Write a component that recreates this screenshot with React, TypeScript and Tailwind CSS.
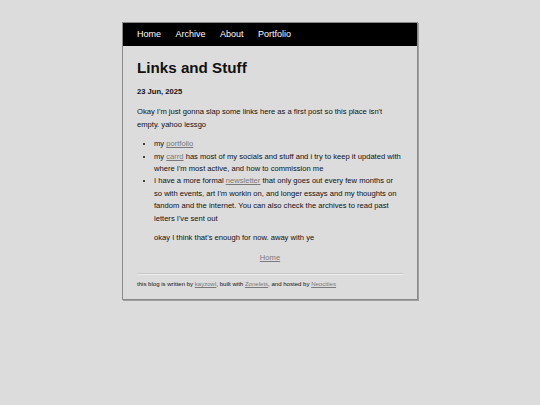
import React from 'react';

const navLinks = ['Home', 'Archive', 'About', 'Portfolio'];

function A({ children }: { children: React.ReactNode }) {
  return (
    <a href="#" className="text-[#7a7a7a] underline">
      {children}
    </a>
  );
}

export default function App() {
  return (
    <div className="min-h-screen bg-[#dcdcdc] pt-[22px] font-['Liberation_Sans',Arial,sans-serif] text-[#111]">
      <div className="mx-auto w-[296px] border border-[#8a8a8a] bg-[#dcdcdc] shadow-[1px_1px_0_#a0a0a0]">
        <nav className="flex h-[23px] items-center gap-[14.5px] bg-black px-[14px] text-[9px] text-white">
          {navLinks.map((l) => (
            <a key={l} href="#">
              {l}
            </a>
          ))}
        </nav>

        <main className="px-[14px] pb-[10px] text-[7.6px] leading-[12.4px]">
          <h1 className="mt-[13px] text-[15.2px] font-bold leading-[17px]">Links and Stuff</h1>
          <p className="mt-[10px] font-bold">23 Jun, 2025</p>
          <p className="mt-[8px]">
            Okay I'm just gonna slap some links here as a first post so this place isn't empty. yahoo lessgo
          </p>

          <ul className="mt-[7px] list-disc pl-[17px]">
            <li>
              my <A>portfolio</A>
            </li>
            <li>
              my <A>carrd</A> has most of my socials and stuff and i try to keep it updated with where I'm
              most active, and how to commission me
            </li>
            <li>
              I have a more formal <A>newsletter</A> that only goes out every few months or so with events, art
              I'm workin on, and longer essays and my thoughts on fandom and the internet. You can also check
              the archives to read past letters I've sent out
            </li>
          </ul>

          <p className="mt-[7px] pl-[17px]">okay I think that's enough for now. away with ye</p>

          <p className="mt-[7.5px] text-center">
            <A>Home</A>
          </p>

          <hr className="mt-[8.5px] border-t border-b border-t-[#c9c9c9] border-b-[#ececec]" />

          <footer className="mt-[4px] text-[6.05px] leading-[10px]">
            this blog is written by <A>kayzowl</A>, built with <A>Zonelets</A>, and hosted by <A>Neocities</A>
          </footer>
        </main>
      </div>
    </div>
  );
}
